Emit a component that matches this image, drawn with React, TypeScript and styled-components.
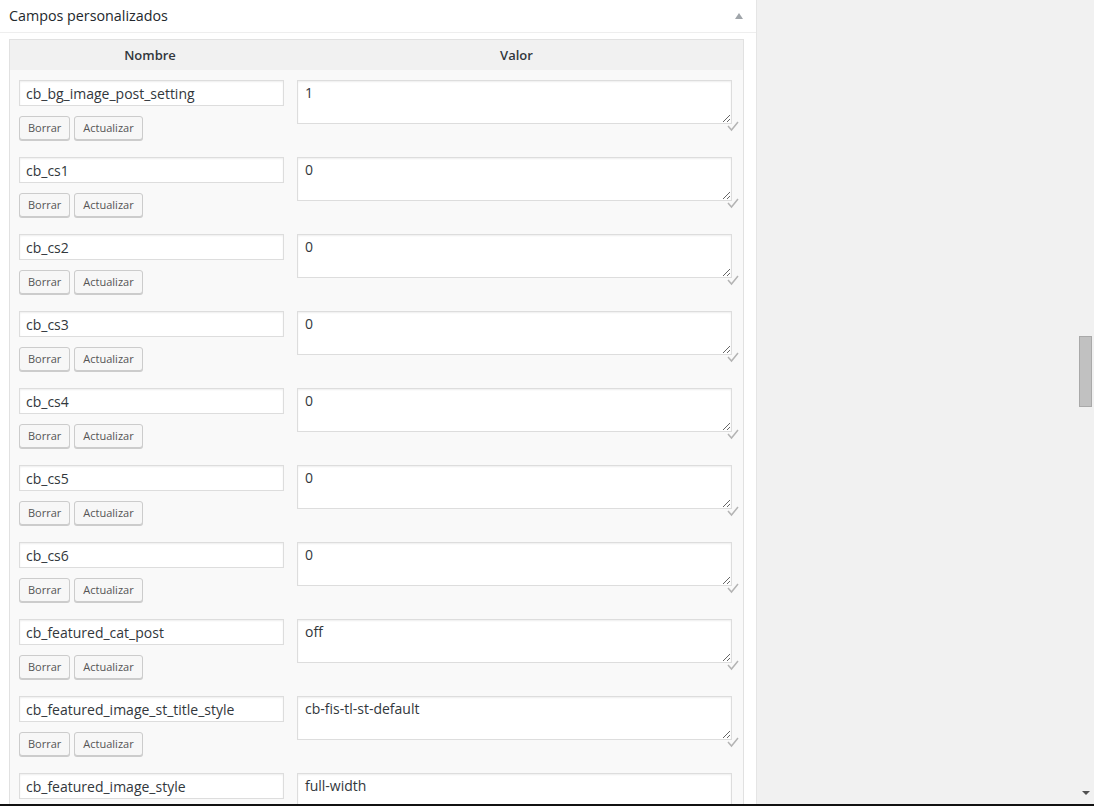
import React from "react";
import styled, { createGlobalStyle } from "styled-components";

const Global = createGlobalStyle`
  html, body { margin: 0; padding: 0; background: #f1f1f1; overflow: hidden; }
  body { font-family: "Open Sans", "Noto Sans", sans-serif; color: #444; }
  #root { height: 806px; overflow: hidden; }
  * { box-sizing: border-box; }
`;

const Page = styled.div`
  display: flex;
  height: 806px;
  overflow: hidden;
`;

const Postbox = styled.div`
  width: 757px;
  flex: none;
  background: #fff;
  border-right: 1px solid #e5e5e5;
  display: flex;
  flex-direction: column;
`;

const Header = styled.div`
  height: 33px;
  flex: none;
  display: flex;
  align-items: center;
  justify-content: space-between;
  padding: 0 13px 2px 9px;
  border-bottom: 1px solid #eee;
`;

const Title = styled.h2`
  margin: 0;
  font-size: 14.3px;
  font-weight: 400;
  color: #23282d;
`;

const Toggle = styled.span`
  width: 0;
  height: 0;
  border-left: 4px solid transparent;
  border-right: 4px solid transparent;
  border-bottom: 6px solid #a0a5aa;
  margin-top: 2px;
`;

const Inside = styled.div`
  padding: 6px 12px 0 9px;
`;

const Table = styled.div`
  border: 1px solid #e1e1e1;
  background: #f9f9f9;
`;

const HeadRow = styled.div`
  display: grid;
  grid-template-columns: 280px 1fr;
  height: 30px;
  background: #f1f1f1;
  align-items: center;
`;

const Th = styled.div`
  text-align: center;
  font-size: 13px;
  font-weight: 600;
  color: #32373c;
`;

const Row = styled.div`
  display: grid;
  grid-template-columns: 280px 1fr;
  padding: 10px 0 7px;
`;

const LeftCell = styled.div`
  padding-left: 9px;
  display: flex;
  flex-direction: column;
  gap: 10px;
`;

const RightCell = styled.div`
  padding: 0 10px 0 7px;
  position: relative;
`;

const KeyInput = styled.input`
  width: 265px;
  height: 26px;
  border: 1px solid #ddd;
  box-shadow: inset 0 1px 2px rgba(0, 0, 0, 0.07);
  background: #fff;
  font-family: "Open Sans", sans-serif;
  font-size: 14px;
  color: #32373c;
  padding: 0 6px;
  margin: 0;
  outline: none;
`;

const ValueArea = styled.textarea`
  display: block;
  width: 435px;
  height: 44px;
  border: 1px solid #ddd;
  box-shadow: inset 0 1px 2px rgba(0, 0, 0, 0.07);
  background: #fff;
  font-family: "Open Sans", sans-serif;
  font-size: 14px;
  line-height: 20px;
  color: #32373c;
  padding: 2px 7px;
  margin: 0;
  outline: none;
`;

const Buttons = styled.div`
  display: flex;
  gap: 4px;
`;

const SmallButton = styled.button`
  height: 24px;
  padding: 0 8px;
  font-family: "Open Sans", sans-serif;
  font-size: 11px;
  line-height: 22px;
  color: #555;
  background: #f7f7f7;
  border: 1px solid #ccc;
  border-radius: 3px;
  box-shadow: 0 1px 0 #ccc;
  margin: 0;
`;

const Check = styled.svg`
  position: absolute;
  left: 436px;
  top: 39px;
  pointer-events: none;
`;

const RightArea = styled.div`
  flex: 1;
`;

const Scrollbar = styled.div`
  width: 16px;
  flex: none;
  position: relative;
  background: #f1f1f1;
`;

const Thumb = styled.div`
  position: absolute;
  left: 1px;
  top: 336px;
  width: 13px;
  height: 71px;
  background: #c1c1c1;
  border: 1px solid #a9a9a9;
`;

const DownArrow = styled.div`
  position: absolute;
  left: 4px;
  top: 791px;
  width: 0;
  height: 0;
  border-left: 4px solid transparent;
  border-right: 4px solid transparent;
  border-top: 4px solid #505050;
`;

const BottomLine = styled.div`
  position: fixed;
  left: 0;
  right: 0;
  bottom: 0;
  height: 2px;
  background: #111;
`;

const rows: [string, string][] = [
  ["cb_bg_image_post_setting", "1"],
  ["cb_cs1", "0"],
  ["cb_cs2", "0"],
  ["cb_cs3", "0"],
  ["cb_cs4", "0"],
  ["cb_cs5", "0"],
  ["cb_cs6", "0"],
  ["cb_featured_cat_post", "off"],
  ["cb_featured_image_st_title_style", "cb-fis-tl-st-default"],
  ["cb_featured_image_style", "full-width"],
];

export default function App() {
  return (
    <>
      <Global />
      <Page>
        <Postbox>
          <Header>
            <Title>Campos personalizados</Title>
            <Toggle />
          </Header>
          <Inside>
            <Table>
              <HeadRow>
                <Th>Nombre</Th>
                <Th>Valor</Th>
              </HeadRow>
              {rows.map(([k, v]) => (
                <Row key={k}>
                  <LeftCell>
                    <KeyInput defaultValue={k} />
                    <Buttons>
                      <SmallButton>Borrar</SmallButton>
                      <SmallButton>Actualizar</SmallButton>
                    </Buttons>
                  </LeftCell>
                  <RightCell>
                    <ValueArea defaultValue={v} spellCheck={false} />
                    <Check width="14" height="14" viewBox="0 0 14 14">
                      <path d="M2 7 L5.5 11 L12 3" fill="none" stroke="#b4b4b4" strokeWidth="1.5" />
                    </Check>
                  </RightCell>
                </Row>
              ))}
            </Table>
          </Inside>
        </Postbox>
        <RightArea />
        <Scrollbar>
          <Thumb />
          <DownArrow />
        </Scrollbar>
      </Page>
      <BottomLine />
    </>
  );
}
